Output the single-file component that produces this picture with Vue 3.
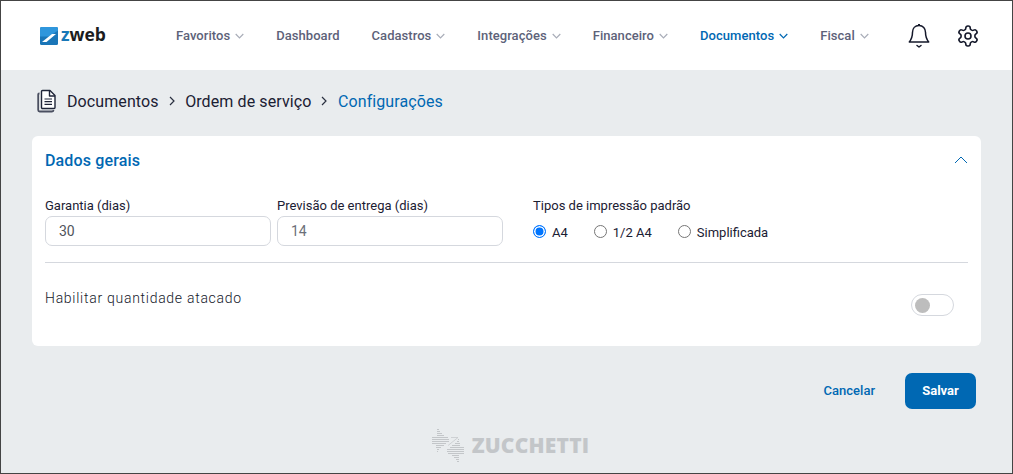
<script setup>
const nav = [
  { label: 'Favoritos', chevron: true },
  { label: 'Dashboard', chevron: false },
  { label: 'Cadastros', chevron: true },
  { label: 'Integrações', chevron: true },
  { label: 'Financeiro', chevron: true },
  { label: 'Documentos', chevron: true, active: true },
  { label: 'Fiscal', chevron: true },
]
const radios = [
  { label: 'A4', checked: true },
  { label: '1/2 A4', checked: false },
  { label: 'Simplificada', checked: false },
]
</script>

<template>
  <div class="frame">
    <header class="top">
      <div class="logo">
        <svg width="18" height="18" viewBox="0 0 18 18">
          <rect width="18" height="18" rx="1.500" fill="#1a76b8" />
          <path d="M1.500 0H16.500A1.500 1.500 0 0 1 18 1.500V3.500L9 9.500H0V1.500A1.500 1.500 0 0 1 1.500 0Z" fill="#2f96dc" />
          <path d="M2 15L12 7H16L6.500 15Z" fill="#fff" />
        </svg>
        <span class="logo-text"><span class="z">z</span>web</span>
      </div>
      <nav class="nav">
        <a v-for="item in nav" :key="item.label" class="nav-item" :class="{ active: item.active }">
          {{ item.label }}
          <svg v-if="item.chevron" class="chev" width="9" height="6" viewBox="0 0 9 6">
            <path d="M.7 1l3.800 3.800L8.300 1" fill="none" stroke="currentColor" stroke-width="1.200" />
          </svg>
        </a>
      </nav>
      <div class="icons">
        <svg width="24" height="26" viewBox="0 0 24 26" fill="none" stroke="#14182a" stroke-width="1.500" stroke-linejoin="round">
          <path d="M12 2.500c-4 0-6.500 3-6.500 6.800 0 5-1 7-3.200 9.700h19.400c-2.200-2.700-3.200-4.700-3.200-9.700 0-3.800-2.500-6.800-6.500-6.800z" />
          <path d="M11 1.700h2" />
          <path d="M10 22.500l2 1.500 2-1.500" stroke-linecap="round" />
        </svg>
        <svg width="24" height="24" viewBox="0 0 24 24" fill="none" stroke="#14182a" stroke-width="1.600" stroke-linejoin="round">
          <path d="M12.220 2h-.44a2 2 0 0 0-2 2v.18a2 2 0 0 1-1 1.730l-.43.25a2 2 0 0 1-2 0l-.15-.08a2 2 0 0 0-2.730.73l-.22.38a2 2 0 0 0 .73 2.730l.15.1a2 2 0 0 1 1 1.720v.51a2 2 0 0 1-1 1.740l-.15.09a2 2 0 0 0-.73 2.730l.22.38a2 2 0 0 0 2.730.73l.15-.08a2 2 0 0 1 2 0l.43.25a2 2 0 0 1 1 1.730V20a2 2 0 0 0 2 2h.44a2 2 0 0 0 2-2v-.18a2 2 0 0 1 1-1.730l.43-.25a2 2 0 0 1 2 0l.15.08a2 2 0 0 0 2.730-.73l.22-.39a2 2 0 0 0-.73-2.730l-.15-.08a2 2 0 0 1-1-1.740v-.5a2 2 0 0 1 1-1.740l.15-.09a2 2 0 0 0 .73-2.730l-.22-.38a2 2 0 0 0-2.730-.73l-.15.08a2 2 0 0 1-2 0l-.43-.25a2 2 0 0 1-1-1.730V4a2 2 0 0 0-2-2z" />
          <circle cx="12" cy="12" r="3" />
        </svg>
      </div>
    </header>

    <div class="crumbs">
      <svg class="doc" width="20" height="24" viewBox="0 0 20 24" fill="none" stroke="#1f2538" stroke-width="1.400" stroke-linejoin="round">
        <path d="M2.500 4.500h-.3a1 1 0 0 0-1 1V21a1.500 1.500 0 0 0 1.500 1.500H15a1.500 1.500 0 0 0 1.500-1.500" stroke="#4a4f60" stroke-width="1.800" />
        <path d="M5.500 1.500H13l5 5V18.500a1 1 0 0 1-1 1H5.500a1 1 0 0 1-1-1V2.500a1 1 0 0 1 1-1z" fill="#fff" />
        <path d="M12.500 1.500V7H18" />
        <path d="M7.500 10h7.500M7.500 12.700h7.500M7.500 15.400h7.500" stroke-width="1.200" />
      </svg>
      <span>Documentos</span>
      <svg class="sep" width="7" height="10" viewBox="0 0 7 10"><path d="M1 1l4 4-4 4" fill="none" stroke="#2a3040" stroke-width="1.200" /></svg>
      <span>Ordem de serviço</span>
      <svg class="sep" width="7" height="10" viewBox="0 0 7 10"><path d="M1 1l4 4-4 4" fill="none" stroke="#2a3040" stroke-width="1.200" /></svg>
      <span class="current">Configurações</span>
    </div>

    <section class="card">
      <div class="card-head">
        <h2>Dados gerais</h2>
        <svg width="14" height="8" viewBox="0 0 14 8"><path d="M1 7l6-6 6 6" fill="none" stroke="#0068b3" stroke-width="1" /></svg>
      </div>
      <div class="fields">
        <div class="field">
          <label>Garantia (dias)</label>
          <div class="input dark">30</div>
        </div>
        <div class="field">
          <label>Previsão de entrega (dias)</label>
          <div class="input">14</div>
        </div>
        <div class="radio-group">
          <label>Tipos de impressão padrão</label>
          <div class="radios">
            <span v-for="r in radios" :key="r.label" class="radio" :class="{ checked: r.checked }">
              <i class="dot"></i>{{ r.label }}
            </span>
          </div>
        </div>
      </div>
      <hr />
      <div class="toggle-row">
        <span class="toggle-label">Habilitar quantidade atacado</span>
        <span class="toggle"><i></i></span>
      </div>
    </section>

    <div class="actions">
      <button class="cancel">Cancelar</button>
      <button class="save">Salvar</button>
    </div>

    <footer class="brand">
      <svg width="32" height="35" viewBox="0 0 32 35" fill="none" stroke="#c3c6c9" stroke-width="1">
        <path d="M5 1.500h2M5 3.500h3M5 5.500h5M5 7.500h7M0 9.500h16M0 11.500h17M0 13.500h17M0 15.500h14M4 17.500h8M4 19.500h5M5 21.500h2M5 23.500h1" />
        <path d="M16 17.500L26 9.500H19" stroke-width=".7" />
        <path d="M27 33.500h-2M27 31.500h-3M27 29.500h-5M27 27.500h-7M32 25.500H16M32 23.500H15M32 21.500H15M32 19.500H18M28 17.500h-8M28 15.500h-5M27 13.500h-2M27 11.500h-1" />
      </svg>
      <span>ZUCCHETTI</span>
    </footer>
  </div>
</template>

<style>
html, body { margin: 0; padding: 0; }
</style>

<style scoped>
.frame {
  box-sizing: border-box;
  width: 1013px;
  height: 474px;
  border: 1px solid #444;
  background: #e9ecee;
  font-family: Roboto, "Liberation Sans", sans-serif;
  color: #1b2033;
  overflow: hidden;
  display: flex;
  flex-direction: column;
}
.top {
  height: 69px;
  flex: none;
  background: #fff;
  display: flex;
  align-items: center;
  padding-left: 38px;
}
.logo {
  display: flex;
  align-items: center;
  gap: 3px;
  width: 137px;
  flex: none;
}
.logo svg { margin-left: 1px; }
.logo-text {
  font-family: "Open Sans", sans-serif;
  font-weight: 700;
  font-size: 17.500px;
  line-height: 18px;
  color: #1a1c20;
  margin-top: -4px;
}
.z { color: #1878b8; }
.nav {
  display: flex;
  gap: 32px;
  align-items: center;
}
.nav-item {
  display: flex;
  align-items: center;
  gap: 5px;
  font-size: 13px;
  font-weight: 500;
  letter-spacing: .05px;
  color: #5d6279;
  white-space: nowrap;
}
.chev { color: #a9adb8; }
.nav-item.active { color: #0068b3; }
.nav-item.active .chev { color: #0068b3; }
.icons {
  margin-left: auto;
  margin-right: 32px;
  display: flex;
  gap: 25px;
  align-items: center;
}
.crumbs {
  display: flex;
  align-items: center;
  height: 62px;
  padding-left: 36px;
  font-size: 16px;
  letter-spacing: .1px;
  color: #1b2033;
  flex: none;
}
.doc { margin-right: 10px; }
.sep { margin: 0 9.500px 0 10px; }
.current { color: #0068b3; }
.card {
  flex: none;
  box-sizing: border-box;
  width: 949px;
  height: 210px;
  margin-left: 31px;
  margin-top: 4px;
  background: #fff;
  border-radius: 6px;
  padding: 0 13px;
}
.card-head {
  height: 48px;
  display: flex;
  align-items: center;
  justify-content: space-between;
}
h2 {
  margin: 0;
  font-size: 16px;
  font-weight: 500;
  letter-spacing: .15px;
  color: #0068b3;
}
.fields {
  display: flex;
  margin-top: 14px;
  height: 48px;
}
.field {
  width: 226px;
  margin-right: 6px;
  flex: none;
}
.field label, .radio-group label {
  display: block;
  font-size: 13px;
  line-height: 15px;
  color: #1b2033;
  margin-bottom: 3px;
}
.input {
  box-sizing: border-box;
  height: 30px;
  border: 1px solid #d5d8de;
  border-radius: 7px;
  padding-left: 13px;
  line-height: 28px;
  font-size: 14px;
  color: #6b6f78;
}
.input.dark { color: #50545c; }
.radio-group { margin-left: 24px; }
.radios {
  display: flex;
  gap: 26px;
  font-size: 13px;
  margin-top: 12px;
}
.radio {
  display: flex;
  align-items: center;
  gap: 6px;
  color: #1b2033;
}
.dot {
  box-sizing: border-box;
  width: 13px;
  height: 13px;
  border: 1px solid #767676;
  border-radius: 50%;
  background: #fff;
  margin-top: -2px;
}
.checked .dot {
  border-color: #0075ff;
  box-shadow: inset 0 0 0 1.500px #fff;
  background: #0075ff;
}
hr {
  border: 0;
  border-top: 1px solid #d5d8de;
  margin: 16px 0 0;
}
.toggle-row {
  display: flex;
  justify-content: space-between;
  padding-right: 14px;
}
.toggle-label {
  font-size: 14px;
  font-weight: 300;
  letter-spacing: .72px;
  color: #14182a;
  margin-top: 26px;
  line-height: 18px;
}
.toggle {
  box-sizing: border-box;
  width: 43px;
  height: 22px;
  margin-top: 31px;
  border: 1px solid #d5d8de;
  border-radius: 11px;
  display: flex;
  align-items: center;
  padding-left: 3px;
  background: #fff;
}
.toggle i {
  width: 15px;
  height: 15px;
  border-radius: 50%;
  background: #bdbdbd;
}
.actions {
  display: flex;
  justify-content: flex-end;
  align-items: center;
  margin-top: 27px;
  padding-right: 36px;
  gap: 30px;
  flex: none;
}
button {
  border: 0;
  font-family: inherit;
  font-size: 13px;
  font-weight: 700;
  cursor: pointer;
}
.cancel { background: none; color: #0068b3; padding: 0 0 2px; font-weight: 500; }
.save {
  width: 71px;
  height: 36px;
  padding: 0 0 2px;
  background: #0068b3;
  color: #fff;
  border-radius: 7px;
}
.brand {
  display: flex;
  align-items: center;
  justify-content: center;
  gap: 8px;
  margin-top: 19px;
  color: #c3c6c9;
  font-family: "Open Sans", sans-serif;
  font-weight: 800;
  font-size: 21px;
  letter-spacing: .2px;
  height: 34px;
  flex: none;
  padding-left: 8px;
}
</style>
